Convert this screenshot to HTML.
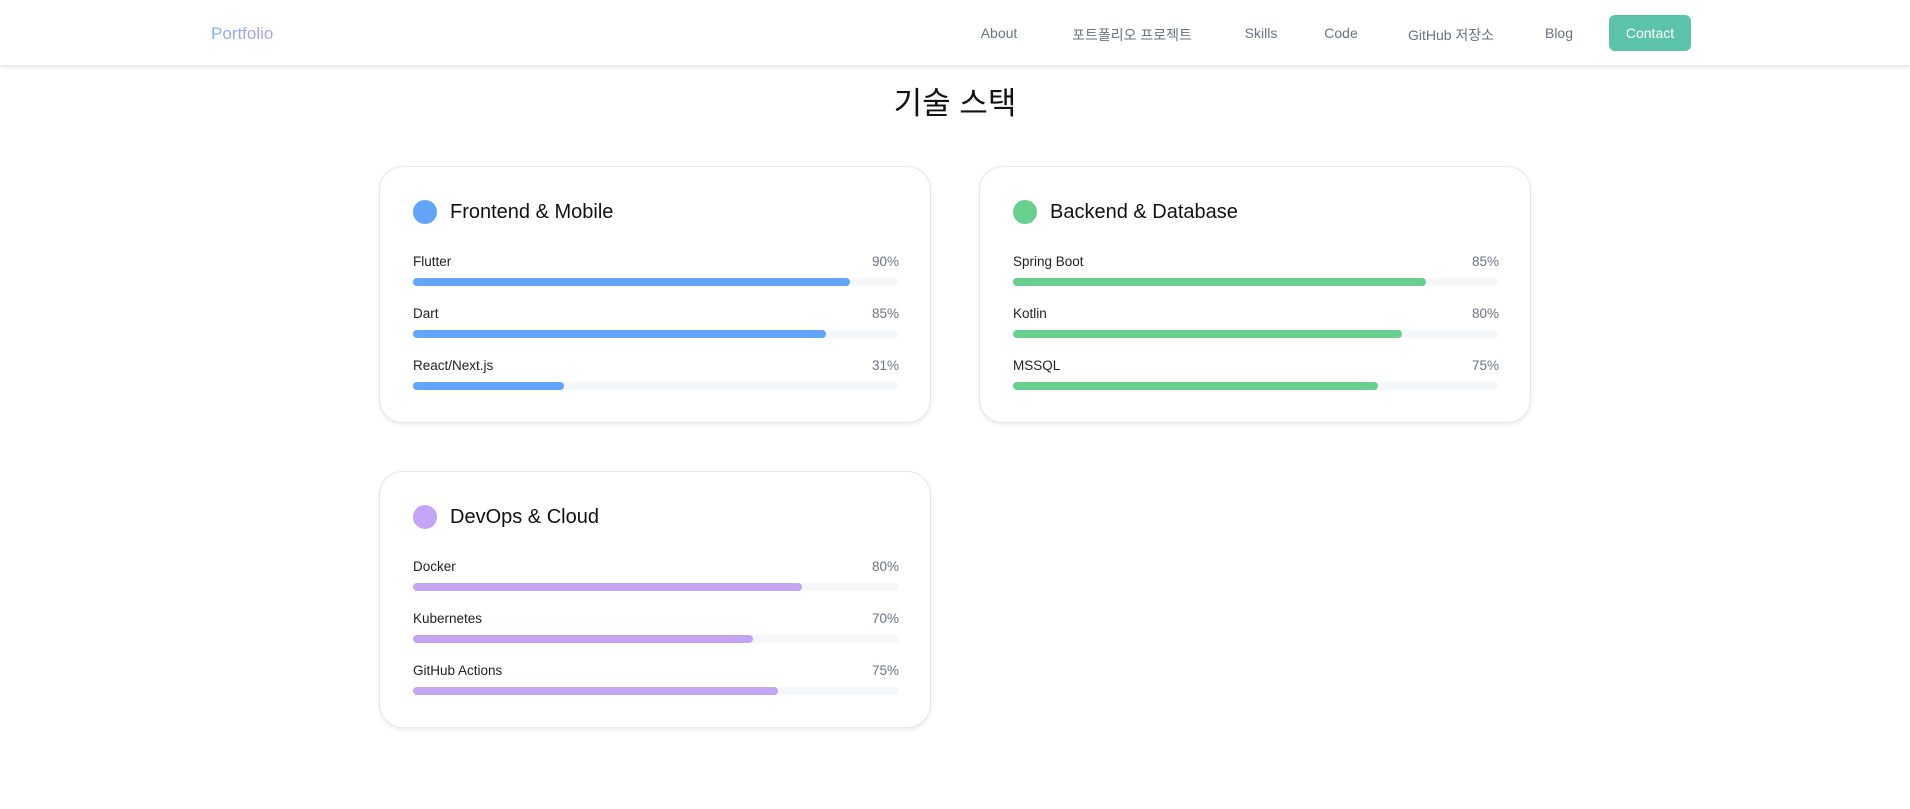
<!DOCTYPE html>
<html><head><meta charset="utf-8"><style>
*{box-sizing:border-box;margin:0;padding:0}
body{width:1910px;height:809px;background:#fff;font-family:"Liberation Sans","Noto Sans CJK KR",sans-serif;overflow:hidden;position:relative}
.nav{position:absolute;left:0;top:0;width:1910px;height:65px;background:#fff;box-shadow:0 2px 4px rgba(0,0,0,.12)}
.logo{position:absolute;left:211px;top:24px;font-size:17px;color:#8fa8f5;background:linear-gradient(90deg,#7fb0f7,#b59cf3);-webkit-background-clip:text;color:transparent}
.ni{position:absolute;top:25px;font-size:14px;color:#6b7280;transform:translateX(-50%);white-space:nowrap}
.btn{position:absolute;left:1609px;top:15px;width:82px;height:36px;background:#5bc4a8;border-radius:6px;color:#fff;font-size:14px;text-align:center;line-height:36px}
h1{position:absolute;top:78px;left:0;width:1910px;text-align:center;font-size:31px;font-weight:normal;color:#111}
.card{position:absolute;width:552px;height:257px;border:1.5px solid #e5e7eb;border-radius:24px;box-shadow:0 2px 5px rgba(0,0,0,.08);background:#fff}
.ht{position:absolute;left:33px;top:33px;display:flex;align-items:center}
.dot{width:24px;height:24px;border-radius:50%;margin-right:13px}
.ht span{font-size:20px;color:#111}
.row{position:absolute;left:33px;width:486px}
.lab{font-size:13.5px;color:#222;display:flex;justify-content:space-between}
.lab i{font-style:normal;color:#6b7280}
.tr{margin-top:9px;height:8px;background:#f6f7f9;border-radius:4px}
.fl{height:8px;border-radius:4px}
</style></head><body>
<div class="nav">
<div class="logo">Portfolio</div>
<div class="ni" style="left:999px">About</div>
<div class="ni" style="left:1132px">포트폴리오 프로젝트</div>
<div class="ni" style="left:1261px">Skills</div>
<div class="ni" style="left:1341px">Code</div>
<div class="ni" style="left:1451px">GitHub 저장소</div>
<div class="ni" style="left:1559px">Blog</div>
<div class="btn">Contact</div>
</div>
<h1>기술 스택</h1>

<div class="card" style="left:379px;top:166px">
<div class="ht"><div class="dot" style="background:#60a5fa"></div><span>Frontend &amp; Mobile</span></div>
<div class="row" style="top:87px"><div class="lab">Flutter<i>90%</i></div><div class="tr"><div class="fl" style="width:90%;background:#60a5fa"></div></div></div>
<div class="row" style="top:139px"><div class="lab">Dart<i>85%</i></div><div class="tr"><div class="fl" style="width:85%;background:#60a5fa"></div></div></div>
<div class="row" style="top:191px"><div class="lab">React/Next.js<i>31%</i></div><div class="tr"><div class="fl" style="width:31%;background:#60a5fa"></div></div></div>
</div>

<div class="card" style="left:979px;top:166px">
<div class="ht"><div class="dot" style="background:#68d08e"></div><span>Backend &amp; Database</span></div>
<div class="row" style="top:87px"><div class="lab">Spring Boot<i>85%</i></div><div class="tr"><div class="fl" style="width:85%;background:#68d08e"></div></div></div>
<div class="row" style="top:139px"><div class="lab">Kotlin<i>80%</i></div><div class="tr"><div class="fl" style="width:80%;background:#68d08e"></div></div></div>
<div class="row" style="top:191px"><div class="lab">MSSQL<i>75%</i></div><div class="tr"><div class="fl" style="width:75%;background:#68d08e"></div></div></div>
</div>

<div class="card" style="left:379px;top:471px">
<div class="ht"><div class="dot" style="background:#c4a4f4"></div><span>DevOps &amp; Cloud</span></div>
<div class="row" style="top:87px"><div class="lab">Docker<i>80%</i></div><div class="tr"><div class="fl" style="width:80%;background:#c4a4f4"></div></div></div>
<div class="row" style="top:139px"><div class="lab">Kubernetes<i>70%</i></div><div class="tr"><div class="fl" style="width:70%;background:#c4a4f4"></div></div></div>
<div class="row" style="top:191px"><div class="lab">GitHub Actions<i>75%</i></div><div class="tr"><div class="fl" style="width:75%;background:#c4a4f4"></div></div></div>
</div>
</body></html>
